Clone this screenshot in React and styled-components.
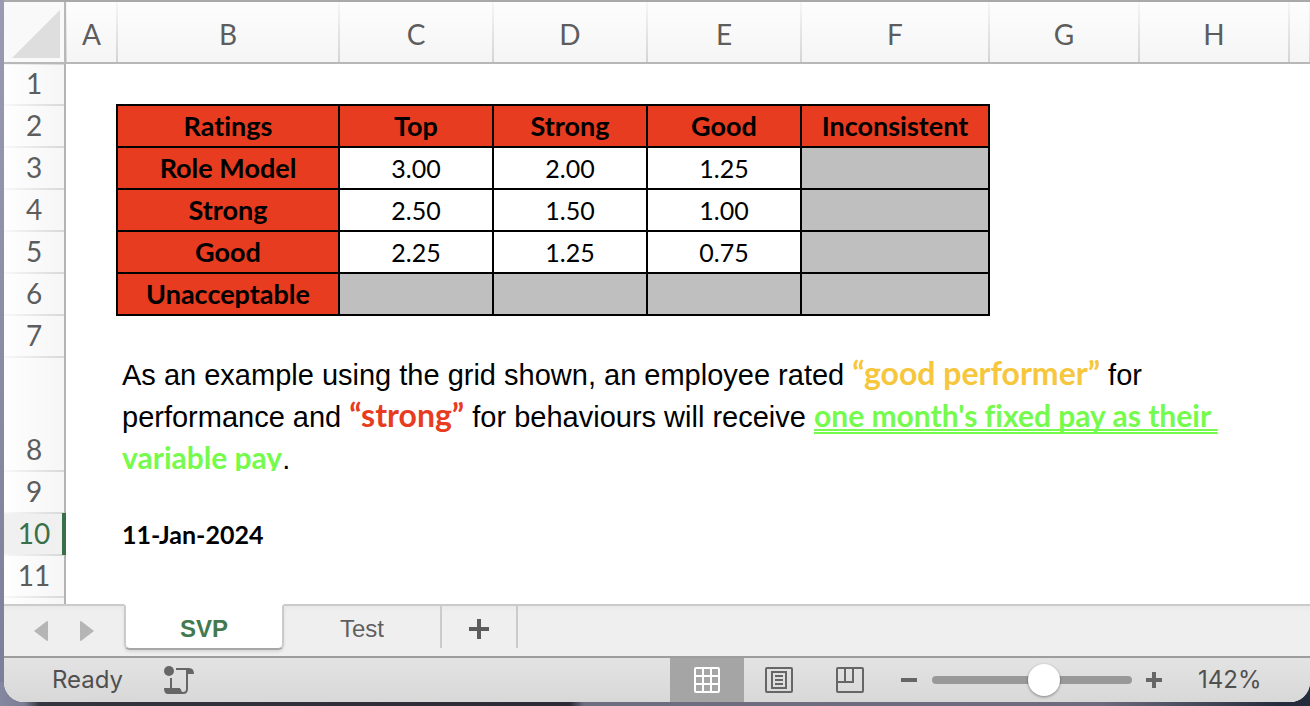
import React, { useState } from "react";
import styled, { createGlobalStyle, css } from "styled-components";

const GlobalStyle = createGlobalStyle`
  * { box-sizing: border-box; }
  body { margin: 0; background: #7d7f98; }
  button { border: 0; background: none; padding: 0; font: inherit; color: inherit; }
`;

const sheetFont = `Lato, "Liberation Sans", sans-serif`;
const textFont = `"Liberation Sans", Arial, sans-serif`;
const uiFont = `Inter, "Liberation Sans", sans-serif`;

const Desktop = styled.div`
  height: 100vh;
  min-height: 400px;
  padding: 0 0 4px 4px;
  overflow: hidden;
  background:
    linear-gradient(90deg, #8587a0 0, #7b7d94 24px, #34343f 40px, #2b2a36 570px, #6f6d80 584px, #6c6a7c 1100px, #252c3b 1280px) bottom / 100% 24px no-repeat,
    linear-gradient(#9a9bb0, #7b7e97);
`;

const Window = styled.main`
  height: 100%;
  display: flex;
  flex-direction: column;
  overflow: hidden;
  border-top: 2px solid #a9a9a9;
  border-radius: 0 0 20px 20px;
  background: #fff;
`;

const SheetArea = styled.section`
  flex: 1;
  min-height: 0;
  overflow: hidden;
`;

const Grid = styled.table`
  width: 100%;
  table-layout: fixed;
  border-collapse: collapse;
  font-family: ${sheetFont};
  font-variant-ligatures: none;
  color: #000;
`;

const Col = styled.col`
  width: ${(p) => p.$w}px;
`;

const Row = styled.tr`
  height: ${(p) => p.$h || 42}px;
`;

const Corner = styled.td`
  height: 61px;
  padding: 0 4px 4px 0;
  vertical-align: bottom;
  text-align: right;
  border-right: 2px solid #b8b8b8;
  border-bottom: 2px solid #b8b8b8;
  background: #f9f9f9;
  svg { display: block; margin-left: auto; }
`;

const columnLine = css`linear-gradient(#f6f6f6, #d4d4d4)`;
const rowLine = css`linear-gradient(90deg, #f8f8f8, #d8d8d8)`;

const ColumnHead = styled.th`
  padding: 4px 0 0;
  font-size: 28px;
  font-weight: 400;
  line-height: 40px;
  color: #5d5d5d;
  border-bottom: 2px solid #b8b8b8;
  background:
    ${columnLine} left / 1px 100% no-repeat,
    ${columnLine} right / 1px 100% no-repeat,
    linear-gradient(#fdfdfd, #f5f5f5);
`;

const RowHead = styled.th`
  padding: 0 0 4px;
  font-size: 28px;
  font-weight: 400;
  line-height: 36px;
  vertical-align: bottom;
  color: ${(p) => (p.$active ? "#3a7049" : "#5d5d5d")};
  border-right: 2px solid ${(p) => (p.$active ? "#3a7049" : "#b4b4b4")};
  box-shadow: ${(p) => (p.$active ? "inset -2px 0 #3a7049" : "none")};
  background:
    ${rowLine} top / 100% 1px no-repeat,
    ${rowLine} bottom / 100% 1px no-repeat,
    ${(p) => (p.$active ? "#f0f0f0" : "linear-gradient(90deg, #fefefe, #f6f6f6)")};
`;

const Cell = styled.td`
  padding: 0 5px;
  font-size: 25px;
  line-height: 40px;
  white-space: nowrap;
`;

const RatingCell = styled(Cell)`
  text-align: center;
  border: 2px solid #000;
  font-size: ${(p) => (p.$head ? 27 : 25)}px;
  font-weight: ${(p) => (p.$head ? 700 : 400)};
  background: ${(p) => (p.$head ? "#e73c1f" : p.$empty ? "#bfbfbf" : "#fff")};
`;

const DateCell = styled(Cell)`
  font-weight: 700;
`;

const NoteCell = styled.td`
  padding: 0 5px;
  vertical-align: bottom;
`;

const NoteClip = styled.div`
  height: 113px;
  overflow: hidden;
`;

const Note = styled.p`
  margin: -4px 0 0;
  font-family: ${textFont};
  font-size: 29px;
  line-height: 42px;
  white-space: nowrap;
`;

const Mark = styled.span`
  font-family: ${sheetFont};
  font-size: 32px;
  font-weight: 700;
  line-height: 1px;
  color: ${(p) => p.$color};
`;

const Outcome = styled(Mark)`
  font-size: 30px;
  white-space: pre;
  text-decoration: ${(p) => (p.$plain ? "none" : "underline double 2px")};
  text-underline-offset: 2px;
  text-decoration-skip-ink: none;
`;

const TabBar = styled.nav`
  display: flex;
  align-items: flex-start;
  height: 52px;
  flex: none;
  background: linear-gradient(#e7e7e7, #efefef 8px);
  font-family: ${textFont};
  font-size: 24px;
  color: #5f5f5f;
`;

const Arrows = styled.div`
  display: flex;
  align-items: center;
  gap: 32px;
  width: 120px;
  height: 52px;
  padding-left: 30px;
  border-top: 2px solid #cbcbcb;
  button { display: flex; }
`;

const Tab = styled.button`
  height: 44px;
  border-top: 2px solid #cbcbcb;
  border-right: 2px solid #cbcbcb;
  width: ${(p) => p.$w}px;
  display: flex;
  align-items: center;
  justify-content: center;
  padding-top: 4px;
  ${(p) =>
    p.$active &&
    css`
      height: 46px;
      border: 2px solid #cbcbcb;
      border-top-color: #fff;
      border-bottom-color: #a6a6a6;
      border-radius: 0 0 6px 6px;
      background: #fff;
      color: #43794f;
      font-weight: 700;
      box-shadow: 0 2px 3px #d8d8d8;
    `}
`;

const TabRest = styled.div`
  flex: 1;
  border-top: 2px solid #cbcbcb;
`;

const StatusBar = styled.footer`
  display: flex;
  align-items: stretch;
  flex: none;
  height: 46px;
  border-top: 2px solid #9d9d9d;
  background: linear-gradient(#e3e3e3, #d8d8d8);
  font-family: ${uiFont};
  font-size: 24px;
  line-height: 44px;
  color: #505050;
`;

const Ready = styled.span`
  margin-left: 48px;
  width: 111px;
`;

const IconButton = styled.button`
  display: flex;
  align-items: center;
  justify-content: center;
  width: ${(p) => p.$w}px;
  background: ${(p) => (p.$active ? "#a5a5a5" : "none")};
`;

const Spacer = styled.div`
  flex: 1;
`;

const ZoomSlider = styled.input`
  appearance: none;
  width: 200px;
  height: 44px;
  margin: 0;
  background: none;
  &::-webkit-slider-runnable-track {
    height: 8px;
    border-radius: 4px;
    background: #999;
  }
  &::-webkit-slider-thumb {
    appearance: none;
    width: 32px;
    height: 32px;
    margin-top: -12px;
    border-radius: 50%;
    background: #fff;
    box-shadow: 0 1px 3px #0006;
  }
`;

const ZoomValue = styled.output`
  width: 134px;
  padding-left: 22px;
`;

const columns = ["A", "B", "C", "D", "E", "F", "G", "H"];
const widths = [61, 52, 222, 154, 154, 154, 188, 150, 150];

const ratings = [
  ["Ratings", "Top", "Strong", "Good", "Inconsistent"],
  ["Role Model", "3.00", "2.00", "1.25", ""],
  ["Strong", "2.50", "1.50", "1.00", ""],
  ["Good", "2.25", "1.25", "0.75", ""],
  ["Unacceptable", "", "", "", ""],
];

const SelectAllIcon = () => (
  <svg width="48" height="48" viewBox="0 0 48 48"><path d="M48 0V48H0z" fill="#dedede" /></svg>
);

const ArrowIcon = ({ right }) => (
  <svg width="14" height="20" viewBox="0 0 14 20">
    <path d={right ? "M0 1Q0 0 1 0L14 10L1 20Q0 20 0 19z" : "M14 1Q14 0 13 0L0 10L13 20Q14 20 14 19z"} fill="#b5b5b5" />
  </svg>
);

const PlusIcon = () => (
  <svg width="20" height="20" viewBox="0 0 20 20"><path d="M10 0V20M0 10H20" stroke="#5c5c5c" strokeWidth="4" /></svg>
);

const MacroIcon = () => (
  <svg width="30" height="28" viewBox="0 0 30 28" fill="none" stroke="#666" strokeWidth="2">
    <circle cx="5" cy="5" r="5" fill="#666" stroke="none" />
    <path d="M12 3H25M23 3V23Q23 27 19 27Q16 27 16 23" />
    <path d="M7 12V23" />
    <path d="M0 22H16Q16 26 19 28H4Q0 28 0 22z" fill="#666" stroke="none" />
    <path d="M22 2H25Q30 2 30 8H22z" fill="#666" stroke="none" />
  </svg>
);

const NormalIcon = () => (
  <svg width="26" height="26" viewBox="0 0 26 26" fill="none" stroke="#fff" strokeWidth="2">
    <rect x="1" y="1" width="24" height="24" rx="1" />
    <path d="M9 1V25M17 1V25M1 9H25M1 17H25" />
  </svg>
);

const PageLayoutIcon = () => (
  <svg width="28" height="26" viewBox="0 0 28 26" fill="none" stroke="#666" strokeWidth="2">
    <rect x="1" y="1" width="26" height="24" rx="1" />
    <rect x="7" y="5" width="14" height="16" />
    <path d="M10 9H18M10 13H18M10 17H18" />
  </svg>
);

const PageBreakIcon = () => (
  <svg width="28" height="26" viewBox="0 0 28 26" fill="none" stroke="#666" strokeWidth="2">
    <rect x="1" y="1" width="26" height="24" rx="1" />
    <path d="M9 1V15M17 1V15H1" />
  </svg>
);

const ZoomIcon = ({ plus }) => (
  <svg width="16" height="16" viewBox="0 0 16 16">
    <path d={plus ? "M8 0V16M0 8H16" : "M0 8H16"} stroke="#666" strokeWidth="4" />
  </svg>
);

export default function App() {
  const [zoom, setZoom] = useState(142);
  return (
    <Desktop>
      <GlobalStyle />
      <Window>
        <SheetArea>
          <Grid>
            <colgroup>
              {widths.map((w, i) => <Col key={i} $w={w} />)}
              <col />
            </colgroup>
            <thead>
              <Row $h={61}>
                <Corner><SelectAllIcon /></Corner>
                {columns.map((c) => <ColumnHead key={c} scope="col">{c}</ColumnHead>)}
                <ColumnHead />
              </Row>
            </thead>
            <tbody>
              <Row>
                <RowHead scope="row">1</RowHead>
                <Cell colSpan={9} />
              </Row>
              {ratings.map((row, r) => (
                <Row key={r}>
                  <RowHead scope="row">{r + 2}</RowHead>
                  <Cell />
                  {row.map((v, c) => (
                    <RatingCell key={c} $head={r === 0 || c === 0} $empty={!v}>{v}</RatingCell>
                  ))}
                  <Cell colSpan={3} />
                </Row>
              ))}
              <Row>
                <RowHead scope="row">7</RowHead>
                <Cell colSpan={9} />
              </Row>
              <Row $h={114}>
                <RowHead scope="row">8</RowHead>
                <Cell />
                <NoteCell colSpan={8}>
                  <NoteClip>
                    <Note>
                      As an example using the grid shown, an employee rated <Mark $color="#f6c63c">“good performer”</Mark> for
                      <br />
                      performance and <Mark $color="#e73c1f">“strong”</Mark> for behaviours will receive{" "}
                      <Outcome $color="#75fb4c">one month's fixed pay as their </Outcome>
                      <br />
                      <Outcome $color="#75fb4c" $plain>variable pay</Outcome>.
                    </Note>
                  </NoteClip>
                </NoteCell>
              </Row>
              <Row>
                <RowHead scope="row">9</RowHead>
                <Cell colSpan={9} />
              </Row>
              <Row>
                <RowHead scope="row" $active>10</RowHead>
                <Cell />
                <DateCell colSpan={8}>11-Jan-2024</DateCell>
              </Row>
              <Row>
                <RowHead scope="row">11</RowHead>
                <Cell colSpan={9} />
              </Row>
              <Row>
                <RowHead scope="row" />
                <Cell colSpan={9} />
              </Row>
            </tbody>
          </Grid>
        </SheetArea>
        <TabBar aria-label="Sheets">
          <Arrows>
            <button aria-label="Previous sheet"><ArrowIcon /></button>
            <button aria-label="Next sheet"><ArrowIcon right /></button>
          </Arrows>
          <Tab $w={160} $active>SVP</Tab>
          <Tab $w={158}>Test</Tab>
          <Tab $w={76} aria-label="Add sheet"><PlusIcon /></Tab>
          <TabRest />
        </TabBar>
        <StatusBar>
          <Ready>Ready</Ready>
          <IconButton $w={32} aria-label="Record macro"><MacroIcon /></IconButton>
          <Spacer />
          <IconButton $w={74} $active aria-label="Normal view"><NormalIcon /></IconButton>
          <IconButton $w={70} aria-label="Page layout view"><PageLayoutIcon /></IconButton>
          <IconButton $w={72} aria-label="Page break preview"><PageBreakIcon /></IconButton>
          <IconButton $w={46} aria-label="Zoom out"><ZoomIcon /></IconButton>
          <ZoomSlider
            type="range"
            min="10"
            max="241"
            aria-label="Zoom"
            value={zoom}
            onChange={(e) => setZoom(Number(e.target.value))}
          />
          <IconButton $w={44} aria-label="Zoom in"><ZoomIcon plus /></IconButton>
          <ZoomValue>{zoom}%</ZoomValue>
        </StatusBar>
      </Window>
    </Desktop>
  );
}
